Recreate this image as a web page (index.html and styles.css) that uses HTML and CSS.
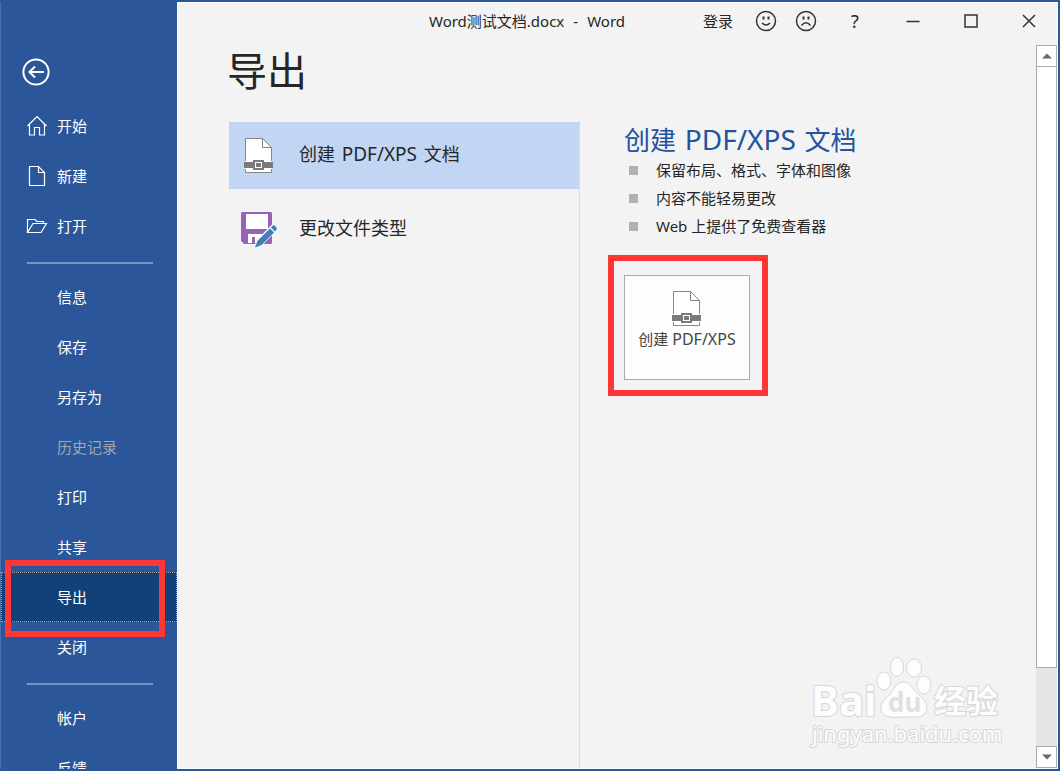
FILE: index.html
```html
<!DOCTYPE html>
<html lang="zh-CN">
<head>
<meta charset="utf-8">
<meta name="viewport" content="width=device-width, initial-scale=1">
<title>Word测试文档.docx - Word</title>
<link rel="stylesheet" href="styles.css">
</head>
<body>
<svg class="defs" width="0" height="0" aria-hidden="true">
  <symbol id="doc-belt" viewBox="0 0 30 36">
    <path d="M1.500 .5H18.500L27.500 9.500V34.500H1.500Z" fill="#fff" stroke="#858585"/>
    <path d="M18.500 .5V9.500H27.500" fill="none" stroke="#858585"/>
    <path d="M1 23H28V31H1Z" fill="#fff"/>
    <path d="M0 24H9V30H0ZM20 24H29V30H20Z" fill="#7a7a7a"/>
    <path d="M10 23H19V31H10Z" fill="#fff" stroke="#7a7a7a" stroke-width="2"/>
    <path d="M12 25H17V29H12Z" fill="#7a7a7a"/>
  </symbol>
</svg>
<div class="window">
  <nav class="sidebar" aria-label="文件">
    <button class="back" type="button" aria-label="返回">
      <svg width="28" height="28" viewBox="0 0 28 28"><circle cx="14" cy="14" r="12.600"/><path d="M22 14H7.500M13 8.500L7.500 14L13 19.500"/></svg>
    </button>
    <a class="item" href="#"><svg class="glyph" width="22" height="22" viewBox="0 0 22 22"><path d="M1.500 11L11 1.500L20.500 11M3.500 9.500V20H8.500V12.500H13.500V20H18.500V9.500"/></svg>开始</a>
    <a class="item" href="#"><svg class="glyph" width="22" height="22" viewBox="0 0 22 22"><path d="M3.500 1.500H12.500L18.500 7.500V20.500H3.500ZM12.500 1.500V7.500H18.500"/></svg>新建</a>
    <a class="item" href="#"><svg class="glyph" width="22" height="22" viewBox="0 0 22 22"><path d="M1.500 17.500V4.500H9L11 6.500H17.500V8.500M1.500 17.500L7 8.500H20.500L15 17.500Z"/></svg>打开</a>
    <hr class="rule">
    <a class="item" href="#">信息</a>
    <a class="item" href="#">保存</a>
    <a class="item" href="#">另存为</a>
    <a class="item disabled" href="#" aria-disabled="true">历史记录</a>
    <a class="item" href="#">打印</a>
    <a class="item" href="#">共享</a>
    <a class="item current" href="#" aria-current="page">导出<span class="mark"></span></a>
    <a class="item" href="#">关闭</a>
    <hr class="rule">
    <a class="item" href="#">帐户</a>
    <a class="item" href="#">反馈</a>
  </nav>
  <div class="main">
    <header class="titlebar">
      <div class="doc-name">Word测试文档.docx<span class="dash">-</span>Word</div>
      <button class="login" type="button">登录</button>
      <button class="face" type="button" aria-label="微笑"><svg width="22" height="22" viewBox="0 0 22 22"><circle cx="11" cy="11" r="9.500"/><path d="M7 13Q11 17 15 13"/><path class="eyes" d="M8.500 6.500V9.500M13.500 6.500V9.500"/></svg></button>
      <button class="face" type="button" aria-label="哭脸"><svg width="22" height="22" viewBox="0 0 22 22"><circle cx="11" cy="11" r="9.500"/><path d="M6.500 15.500Q11 10 15.500 15.500"/><path class="eyes" d="M8.500 6.500V9.500M13.500 6.500V9.500"/></svg></button>
      <button class="ctl" type="button" aria-label="帮助"><span class="help">?</span></button>
      <button class="ctl" type="button" aria-label="最小化"><svg width="14" height="14" viewBox="0 0 14 14"><path d="M.5 7.500H13.500"/></svg></button>
      <button class="ctl" type="button" aria-label="最大化"><svg width="14" height="14" viewBox="0 0 14 14"><path d="M1 1H13V13H1Z"/></svg></button>
      <button class="ctl" type="button" aria-label="关闭窗口"><svg width="14" height="14" viewBox="0 0 14 14"><path d="M1 1L13 13M13 1L1 13"/></svg></button>
    </header>
    <div class="view">
      <main class="page">
        <h1>导出</h1>
        <div class="columns">
          <div class="options">
            <button class="option selected" type="button"><svg class="pic" width="30" height="36"><use href="#doc-belt"/></svg><span>创建 <span class="format">PDF/XPS</span> 文档</span></button>
            <button class="option" type="button"><svg class="pic" width="36" height="36" viewBox="0 0 36 36">
              <path d="M1 0H30L31 1V31L30 32H3L0 29V1Z" fill="#9763b8"/>
              <path d="M5 2H27V17H5Z" fill="#fff"/>
              <path d="M7 22H24V31H14V25H11V31H7Z" fill="#fff"/>
              <path d="M13 36L15.500 28L31 12.500L36.500 18L20.500 34Z" fill="#f3f3f3"/>
              <path d="M14 35.500L16.500 29L29 16.500L33 20.500L20.500 33ZM30 15.500L32 13.500Q33 13 34 14L35.500 15.500Q36 16.500 35.500 17.500L34 19.500Z" fill="#3f7dbb"/>
            </svg>更改文件类型</button>
          </div>
          <section class="detail">
            <h2>创建 <span class="format">PDF/XPS</span> 文档</h2>
            <ul>
              <li>保留布局、格式、字体和图像</li>
              <li>内容不能轻易更改</li>
              <li>Web 上提供了免费查看器</li>
            </ul>
            <div class="action">
              <button class="create" type="button"><svg width="30" height="36"><use href="#doc-belt"/></svg><span>创建 <span class="format">PDF/XPS</span></span></button>
              <span class="mark"></span>
            </div>
          </section>
        </div>
      </main>
      <div class="scroll">
        <button type="button" aria-label="向上滚动"><svg width="10" height="6" viewBox="0 0 10 6"><path d="M0 5.500L5 .5L10 5.500Z"/></svg></button>
        <div class="track"><div class="thumb"></div></div>
        <button type="button" aria-label="向下滚动"><svg width="10" height="6" viewBox="0 0 10 6"><path d="M0 .5L5 5.500L10 .5Z"/></svg></button>
      </div>
    </div>
    <svg class="watermark" width="200" height="100" viewBox="0 0 200 100" aria-label="Baidu经验">
      <g class="wm">
        <text x="4" y="62" class="wm-brand">Bai</text>
        <ellipse cx="77" cy="27" rx="7" ry="9"/>
        <ellipse cx="90" cy="13" rx="6.500" ry="9.500"/>
        <ellipse cx="107" cy="14" rx="7.500" ry="9"/>
        <ellipse cx="117" cy="31" rx="7" ry="9"/>
        <path d="M96 28C102 28 104 32 107 36C112 42 120 46 120 53C120 60 115 63 109 63C104 63 101 63 97 63C93 63 89 64 83 63C76 62 73 58 74 52C75 46 83 42 86 36C89 31 91 28 96 28Z"/>
        <text x="81" y="58" class="wm-du">du</text>
        <text x="127" y="59" class="wm-cjk">经验</text>
        <text x="5" y="88" class="wm-url">jingyan.baidu.com</text>
      </g>
    </svg>
  </div>
</div>
</body>
</html>
```
FILE: styles.css
```css
* { box-sizing: border-box; }

body {
  margin: 0;
  font-family: "Noto Sans", "Noto Sans CJK SC", sans-serif;
  font-size: 15px;
  line-height: 20px;
  color: #262626;
}

button {
  margin: 0;
  padding: 0;
  border: 0;
  background: none;
  color: inherit;
  font: inherit;
}

.defs { position: absolute; }

.window {
  display: flex;
  height: 100vh;
  overflow: hidden;
  padding: 2px 2px 2px 0;
  background: #2b579a;
}

.sidebar {
  flex: none;
  width: 177px;
  overflow: hidden;
  padding-top: 56px;
  border-left: 1px solid #4a6fae;
  color: #fff;
}

.back {
  display: block;
  margin: 0 0 15px 21px;
  height: 28px;
}

.back svg, .glyph {
  display: block;
  fill: none;
  stroke: #fff;
}

.back svg { stroke-width: 2; }

.item {
  position: relative;
  display: flex;
  align-items: center;
  height: 50px;
  padding-left: 56px;
  padding-bottom: 1px;
  color: #fff;
  text-decoration: none;
}

.glyph {
  margin-left: -31px;
  margin-right: 9px;
  stroke-width: 1.2;
}

.disabled { color: #a3a8b0; }

.current {
  background: #124078;
  outline: 1px dotted #a89c90;
  outline-offset: -1px;
}

.mark {
  position: absolute;
  border: 6px solid #ff3636;
  pointer-events: none;
}

.current .mark { inset: -12px 12px -15px 4px; }

.rule {
  height: 2px;
  margin: 11px 24px 8px 26px;
  border: 0;
  background: #6e98c6;
}

.main {
  position: relative;
  flex: 1;
  min-width: 0;
  display: flex;
  flex-direction: column;
  border: 1px solid #fff;
  background: #f3f3f3;
}

.titlebar {
  display: flex;
  align-items: center;
  height: 36px;
  margin-right: -1px;
}

.doc-name {
  flex: 1;
  padding-left: 251px;
  white-space: nowrap;
}

.dash { margin: 0 9px; }

.titlebar button {
  display: flex;
  align-items: center;
  justify-content: center;
  height: 36px;
}

.titlebar svg {
  fill: none;
  stroke: #333;
  stroke-width: 1.5;
}

.titlebar .eyes { stroke-width: 2; }
.titlebar .login { width: 56px; }
.face { width: 40px; }
.ctl { width: 58px; }
.help { font-size: 18px; }

.view {
  flex: 1;
  min-height: 0;
  display: flex;
  padding-top: 6px;
}

.page {
  flex: 1;
  min-width: 0;
  display: flex;
  flex-direction: column;
  padding-left: 51px;
}

h1 {
  margin: -4px 0 20px -2px;
  font-size: 40px;
  font-weight: 400;
  line-height: 60px;
}

.columns {
  flex: 1;
  display: flex;
}

.options {
  width: 351px;
  display: flex;
  flex-direction: column;
  gap: 7px;
  padding-top: 1px;
  border-right: 1px solid #dcdcdc;
}

.option {
  display: flex;
  align-items: center;
  height: 67px;
  font-size: 18px;
  line-height: 24px;
  padding-left: 12px;
  padding-bottom: 4px;
}

.option .format {
  margin: 0 2px;
  font-size: 19px;
}

.pic {
  flex: none;
  width: 36px;
  margin-top: 4px;
  margin-right: 22px;
}

.selected { background: #c2d5f2; }

.detail {
  flex: 1;
  padding-left: 44px;
}

h2 {
  margin: 0;
  font-size: 26px;
  font-weight: 400;
  line-height: 36px;
  color: #2352a0;
}

h2 .format {
  margin: 0 2px;
  font-size: 28px;
}

ul {
  margin: -2px 0 35px;
  padding: 0 0 0 5px;
  list-style: none;
}

li {
  display: flex;
  align-items: center;
  gap: 18px;
  height: 28px;
}

li::before {
  content: "";
  width: 9px;
  height: 9px;
  background: #b1b1b1;
}

.action {
  position: relative;
  width: 126px;
}

.action .mark { inset: -20px -18px -16px -16px; }

.create {
  display: flex;
  flex-direction: column;
  align-items: center;
  gap: 2px;
  width: 126px;
  height: 105px;
  padding-top: 15px;
  border: 1px solid #ababab;
  background: #fdfdfd;
  color: #444;
  white-space: nowrap;
}

.create .format { font-size: 16px; }

.scroll {
  flex: none;
  display: flex;
  flex-direction: column;
  width: 21px;
}

.scroll button {
  display: flex;
  align-items: center;
  justify-content: center;
  height: 22px;
  border: 1px solid #ababab;
  background: #fff;
}

.scroll svg { fill: #6b6b6b; }

.track {
  flex: 1;
  background: #e6e6e6;
}

.thumb {
  height: 88.5%;
  border: 1px solid #ababab;
  border-top: 0;
  background: #fff;
}

.watermark {
  position: absolute;
  right: 50px;
  bottom: 14px;
}

.wm {
  fill: #fdfdfd;
  stroke: #d6d6d6;
  stroke-width: 1;
}

.wm text {
  font-family: "Noto Sans", "Noto Sans CJK SC", sans-serif;
  paint-order: stroke;
  stroke-width: 2;
}

.wm-brand { font-size: 42px; font-weight: 700; }
.wm .wm-du { font-size: 26px; font-weight: 700; fill: #e0e0e0; stroke: none; }
.wm-cjk { font-size: 32px; font-weight: 700; }
.wm-url { font-size: 22px; }
```
